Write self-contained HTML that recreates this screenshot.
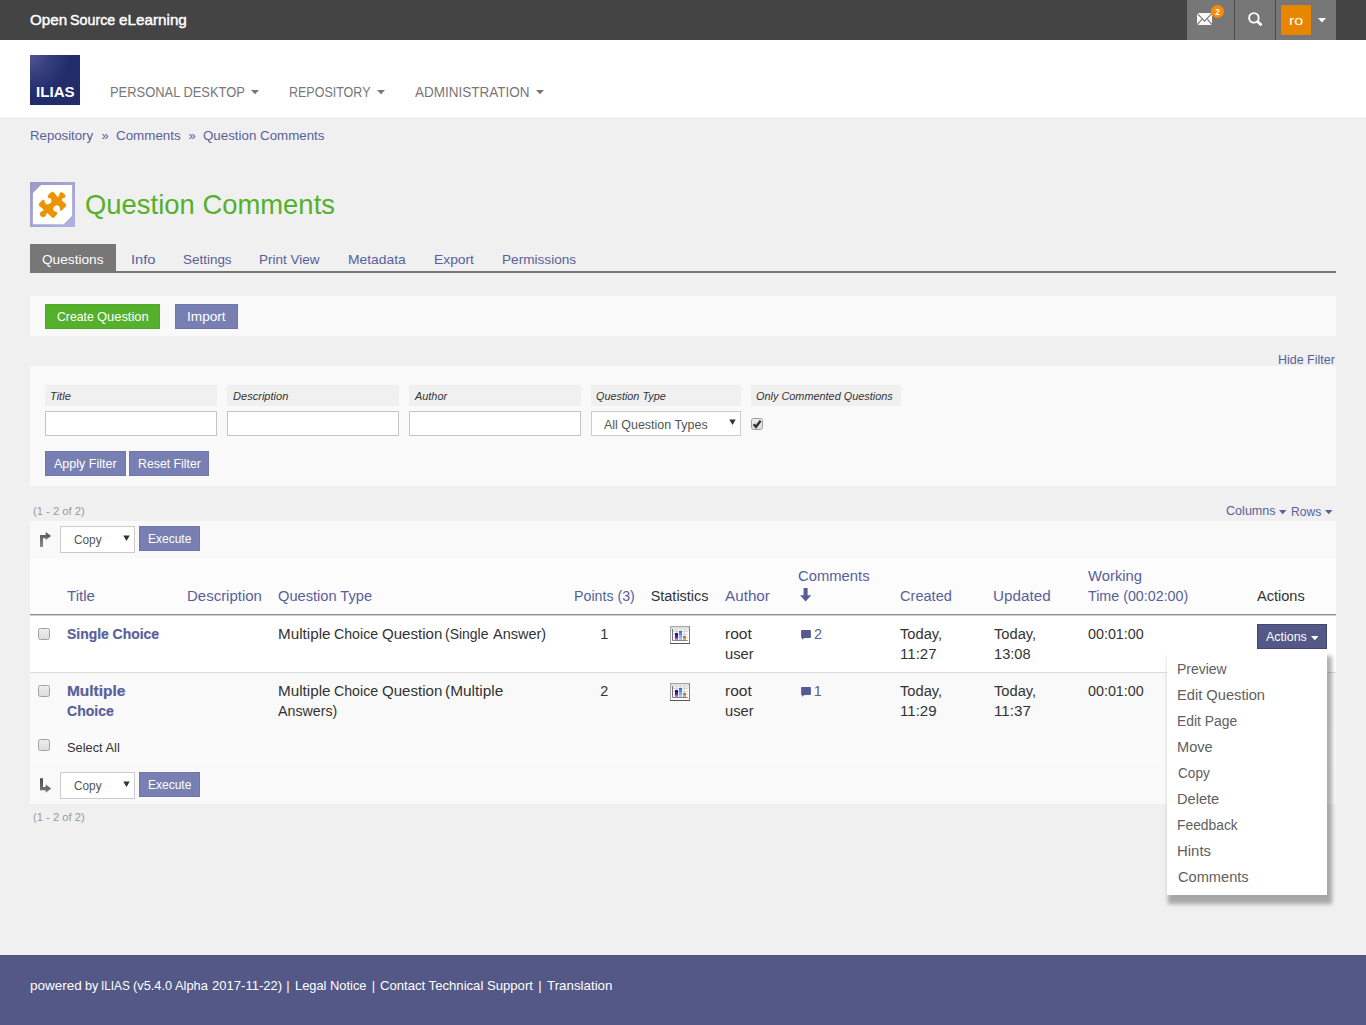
<!DOCTYPE html>
<html lang="en"><head><meta charset="utf-8"><title>Question Comments</title>
<style>
html,body{margin:0;padding:0;}
body{width:1366px;height:1025px;position:relative;overflow:hidden;background:#f0f0f0;font-family:"Liberation Sans",sans-serif;}
#page header,#page nav,#page main,#page footer,#page section,#page ul,#page li{display:contents;}
#page div,#page span,#page a,#page svg{position:absolute;display:block;box-sizing:border-box;}
#page span,#page a{line-height:1;white-space:pre;transform-origin:0 0;text-decoration:none;cursor:pointer;}
</style></head><body><div id="page">
<header>
<div style="left:0px;top:0px;width:1366px;height:40px;background:#444444;"></div>
<div style="left:1187px;top:0px;width:47px;height:40px;background:#777777;"></div>
<div style="left:1234px;top:0px;width:1px;height:40px;background:#4a4a4a;"></div>
<div style="left:1235px;top:0px;width:40px;height:40px;background:#777777;"></div>
<div style="left:1275px;top:0px;width:1px;height:40px;background:#4a4a4a;"></div>
<div style="left:1276px;top:0px;width:60px;height:40px;background:#777777;"></div>
<svg style="left:1196px;top:12px" width="17" height="14" viewBox="0 0 17 14"><rect x="1" y="1.05" width="15" height="11.9" fill="#fafafa"/><path d="M1 1.2 L8.5 9.2 L16 1.4 M1 12.8 L5.9 7.3 M16 12.6 L11.5 7.3" stroke="#777" stroke-width="1.15" fill="none"/></svg>
<div style="left:1211px;top:5px;width:13px;height:13px;border-radius:50%;background:#ff8a00"></div>
<svg style="left:1245px;top:10px" width="20" height="20" viewBox="0 0 20 20"><circle cx="8.9" cy="7.9" r="4.75" stroke="#fff" stroke-width="1.9" fill="none"/><path d="M12.4 11.4 L16.6 15.3" stroke="#fff" stroke-width="2.7" stroke-linecap="butt"/></svg>
<div style="left:1281px;top:5px;width:30px;height:30px;background:#e98600;"></div>
<svg style="left:1318px;top:18px" width="8" height="5" viewBox="0 0 8 5"><path d="M0 0 H8 L4 4.5 Z" fill="#fff"/></svg>
<span style="left:29.86px;top:11.92px;font-size:15.45px;color:#ffffff;transform:scaleX(0.9833);-webkit-text-stroke:0.45px #ffffff;">Open</span>
<span style="left:70.01px;top:11.92px;font-size:15.45px;color:#ffffff;transform:scaleX(0.9242);-webkit-text-stroke:0.45px #ffffff;">Source</span>
<span style="left:119.46px;top:11.92px;font-size:15.45px;color:#ffffff;transform:scaleX(0.9881);-webkit-text-stroke:0.45px #ffffff;">eLearning</span>
<span style="left:1215.24px;top:8.20px;font-size:8.5px;color:#ffffff;font-weight:700;">2</span>
<span style="left:1288.71px;top:13.67px;font-size:13.5px;color:#ffffff;transform:scaleX(1.1905);">ro</span>
<div style="left:0px;top:40px;width:1366px;height:77px;background:#ffffff;"></div>
<div style="left:30px;top:55px;width:50px;height:50px;background:radial-gradient(circle 40px at 0 0, #4e5692 0%, #363f7c 50%, #232c6b 100%);"></div>
<span style="left:35.74px;top:85.00px;font-size:14.3px;color:#ffffff;transform:scaleX(1.0571);font-weight:700;">ILIAS</span>
<nav>
<span style="left:109.63px;top:84.79px;font-size:14.42px;color:#777777;transform:scaleX(0.8961);">PERSONAL DESKTOP</span>
<svg style="left:250.5px;top:90.3px" width="8" height="5" viewBox="0 0 8 5"><path d="M0 0 H8 L4.0 4.3 Z" fill="#777777"/></svg>
<span style="left:288.92px;top:84.79px;font-size:14.42px;color:#777777;transform:scaleX(0.8672);">REPOSITORY</span>
<svg style="left:376.7px;top:90.3px" width="8" height="5" viewBox="0 0 8 5"><path d="M0 0 H8 L4.0 4.3 Z" fill="#777777"/></svg>
<span style="left:415.00px;top:84.79px;font-size:14.42px;color:#777777;transform:scaleX(0.9377);">ADMINISTRATION</span>
<svg style="left:535.7px;top:90.3px" width="8" height="5" viewBox="0 0 8 5"><path d="M0 0 H8 L4.0 4.3 Z" fill="#777777"/></svg>
</nav>
</header>
<main>
<nav>
<a style="left:30.28px;top:129.31px;font-size:12.98px;color:#585f9b;transform:scaleX(1.0180);">Repository</a>
<a style="left:101.50px;top:129.31px;font-size:12.98px;color:#585f9b;">»</a>
<a style="left:115.73px;top:129.31px;font-size:12.98px;color:#585f9b;transform:scaleX(1.0325);">Comments</a>
<a style="left:188.50px;top:129.31px;font-size:12.98px;color:#585f9b;">»</a>
<a style="left:202.99px;top:129.31px;font-size:12.98px;color:#585f9b;transform:scaleX(1.0277);">Question Comments</a>
</nav>
<section>
<svg style="left:30px;top:182px" width="45" height="45" viewBox="0 0 45 45">
<defs><linearGradient id="ig" x1="0" y1="0" x2="1" y2="1"><stop offset="0" stop-color="#999bc4"/><stop offset="0.5" stop-color="#a4a5d2"/><stop offset="1" stop-color="#b1b1e2"/></linearGradient></defs>
<rect width="45" height="45" fill="url(#ig)"/>
<path d="M2.9 11.1 L11.1 2.9 H42.1 V33.7 L33.7 42.2 H2.9 Z" fill="#fff"/>
<g transform="scale(0.05368) translate(-93,-93)"><path fill="#ea9500" stroke="#ea9500" stroke-width="6" stroke-linejoin="round" d="M430 385 C418 350 440 325 480 292 C500 272 530 275 545 295 L580 345 C590 362 600 372 612 372 C628 372 634 352 645 312 C650 290 672 282 700 295 C735 310 755 340 750 365 C745 385 715 390 695 402 C682 412 682 432 700 458 L745 490 C765 505 770 525 755 550 L715 592 C695 615 680 628 665 624 C652 618 652 600 650 580 C648 552 632 530 605 526 C575 522 552 535 538 555 C520 580 515 610 530 630 C545 645 575 648 592 658 C602 670 598 690 590 700 L555 740 C540 755 520 762 505 752 L450 700 C435 682 420 668 408 672 C392 680 392 705 385 722 C378 740 345 748 312 740 C290 732 278 705 280 672 C285 650 320 640 340 630 C352 622 350 608 335 592 L275 545 C258 532 255 512 270 490 L310 442 C322 428 345 418 358 435 C368 450 366 480 380 500 C392 515 415 518 430 512 C460 500 490 480 495 455 C500 425 490 405 470 395 C455 388 440 390 430 385 Z"/></g>
</svg>
<span style="left:84.94px;top:190.73px;font-size:27.13px;color:#55b02c;transform:scaleX(1.0110);">Question Comments</span>
</section>
<nav>
<div style="left:30px;top:271px;width:1306px;height:2px;background:#777777;"></div>
<div style="left:30px;top:244px;width:86px;height:28px;background:#777777;"></div>
<span style="left:41.99px;top:253.07px;font-size:13.39px;color:#ffffff;transform:scaleX(1.0211);">Questions</span>
<a style="left:131.13px;top:253.07px;font-size:13.39px;color:#585f9b;transform:scaleX(1.0976);">Info</a>
<a style="left:183.25px;top:253.07px;font-size:13.39px;color:#585f9b;transform:scaleX(1.0053);">Settings</a>
<a style="left:259.49px;top:253.07px;font-size:13.39px;color:#585f9b;transform:scaleX(1.0085);">Print View</a>
<a style="left:347.96px;top:253.07px;font-size:13.39px;color:#585f9b;transform:scaleX(1.0365);">Metadata</a>
<a style="left:433.97px;top:253.07px;font-size:13.39px;color:#585f9b;transform:scaleX(1.0331);">Export</a>
<a style="left:501.73px;top:253.07px;font-size:13.39px;color:#585f9b;transform:scaleX(1.0175);">Permissions</a>
</nav>
<section>
<div style="left:30px;top:296px;width:1306px;height:40px;background:#f9f9f9;"></div>
<div style="left:45px;top:304px;width:115px;height:25px;background:#55b02c;border:1px solid #4eaa29;"></div>
<div style="left:175px;top:304px;width:63px;height:25px;background:#787fb3;border:1px solid #7077ac;"></div>
<span style="left:56.80px;top:310.74px;font-size:12.36px;color:#ffffff;transform:scaleX(0.9917);">Create</span>
<span style="left:96.58px;top:310.74px;font-size:12.36px;color:#ffffff;transform:scaleX(1.0446);">Question</span>
<span style="left:187.20px;top:310.74px;font-size:12.36px;color:#ffffff;transform:scaleX(1.1029);">Import</span>
</section>
<section>
<a style="left:1278.09px;top:354.24px;font-size:12.36px;color:#585f9b;transform:scaleX(1.0091);">Hide Filter</a>
<div style="left:30px;top:366px;width:1306px;height:120px;background:#f9f9f9;"></div>
<div style="left:45px;top:385px;width:172px;height:21px;background:#f0f0f0;"></div>
<div style="left:227px;top:385px;width:172px;height:21px;background:#f0f0f0;"></div>
<div style="left:409px;top:385px;width:172px;height:21px;background:#f0f0f0;"></div>
<div style="left:591px;top:385px;width:150px;height:21px;background:#f0f0f0;"></div>
<div style="left:751px;top:385px;width:150px;height:21px;background:#f0f0f0;"></div>
<span style="left:49.52px;top:391.21px;font-size:11.33px;color:#333333;transform:scaleX(0.9750);font-style:italic;">Title</span>
<span style="left:232.56px;top:391.21px;font-size:11.33px;color:#333333;transform:scaleX(0.9768);font-style:italic;">Description</span>
<span style="left:415.08px;top:391.21px;font-size:11.33px;color:#333333;transform:scaleX(0.9606);font-style:italic;">Author</span>
<span style="left:596.02px;top:391.21px;font-size:11.33px;color:#333333;transform:scaleX(0.9569);font-style:italic;">Question Type</span>
<span style="left:756.02px;top:391.21px;font-size:11.33px;color:#333333;transform:scaleX(0.9611);font-style:italic;">Only Commented Questions</span>
<div style="left:45px;top:411px;width:172px;height:25px;background:#ffffff;border:1px solid #c4c4c4;"></div>
<div style="left:227px;top:411px;width:172px;height:25px;background:#ffffff;border:1px solid #c4c4c4;"></div>
<div style="left:409px;top:411px;width:172px;height:25px;background:#ffffff;border:1px solid #c4c4c4;"></div>
<div style="left:591px;top:411px;width:150px;height:25px;background:#ffffff;border:1px solid #cccccc;"></div>
<svg style="left:728.7px;top:419.3px" width="8" height="7" viewBox="0 0 8 7"><path d="M0.3 0.4 H6.7 L3.5 5.9 Z" fill="#333"/></svg>
<span style="left:604.00px;top:419.14px;font-size:12.36px;color:#555555;transform:scaleX(1.0078);">All Question Types</span>
<div style="left:751px;top:418px;width:12px;height:12px;border:1px solid #a0a0a0;border-radius:2.5px;background:linear-gradient(#ededed,#dddddd);"></div>
<svg style="left:751px;top:418px" width="12" height="12" viewBox="0 0 12 12"><path d="M2.6 6.2 L5 8.8 L9.6 2.8" stroke="#333" stroke-width="2.4" fill="none"/></svg>
<div style="left:45px;top:451px;width:81px;height:25px;background:#787fb3;border:1px solid #7077ac;"></div>
<div style="left:129px;top:451px;width:80px;height:25px;background:#787fb3;border:1px solid #7077ac;"></div>
<span style="left:54.25px;top:457.54px;font-size:12.36px;color:#ffffff;transform:scaleX(1.0122);">Apply Filter</span>
<span style="left:137.75px;top:457.54px;font-size:12.36px;color:#ffffff;transform:scaleX(0.9960);">Reset Filter</span>
</section>
<section>
<span style="left:33.26px;top:506.31px;font-size:11.33px;color:#999999;transform:scaleX(0.9911);">(1 - 2 of 2)</span>
<a style="left:1225.89px;top:505.14px;font-size:12.36px;color:#585f9b;transform:scaleX(1.0178);">Columns</a>
<svg style="left:1278.5px;top:510.0px" width="7.5" height="5" viewBox="0 0 7.5 5"><path d="M0 0 H7.5 L3.75 4.3 Z" fill="#585f9b"/></svg>
<a style="left:1290.92px;top:506.14px;font-size:12.36px;color:#585f9b;transform:scaleX(0.9763);">Rows</a>
<svg style="left:1324.8px;top:510.4px" width="7.5" height="5" viewBox="0 0 7.5 5"><path d="M0 0 H7.5 L3.75 4.3 Z" fill="#585f9b"/></svg>
<div style="left:30px;top:521px;width:1306px;height:283px;background:#f9f9f9;"></div>
<div style="left:30px;top:558px;width:1306px;height:56px;background:#fcfcfc;"></div>
<div style="left:30px;top:614px;width:1306px;height:1px;background:#8c8c8c;"></div>
<div style="left:30px;top:615px;width:1306px;height:1px;background:#d2d2d2;"></div>
<div style="left:30px;top:616px;width:1306px;height:56px;background:#ffffff;"></div>
<div style="left:30px;top:672px;width:1306px;height:1px;background:#dddddd;"></div>
<div style="left:30px;top:673px;width:1306px;height:56px;background:#f9f9f9;"></div>
<div style="left:30px;top:729px;width:1306px;height:37px;background:#fafafa;"></div>
<svg style="left:39px;top:532px" width="13" height="16" viewBox="0 0 13 16"><defs><linearGradient id="au" x1="0" y1="0" x2="0" y2="1"><stop offset="0" stop-color="#555"/><stop offset="1" stop-color="#8c8c8c"/></linearGradient></defs><path d="M1 14.9 V3 H6.7 V0 L12.2 4.1 L6.7 8.1 V6.3 H4 V14.9 Z" fill="url(#au)"/></svg>
<div style="left:60px;top:526px;width:75px;height:27px;background:#ffffff;border:1px solid #cccccc;"></div>
<svg style="left:122.7px;top:535.3px" width="8" height="7" viewBox="0 0 8 7"><path d="M0.3 0.4 H6.7 L3.5 5.9 Z" fill="#333"/></svg>
<div style="left:139px;top:526px;width:61px;height:25px;background:#787fb3;border:1px solid #7077ac;"></div>
<span style="left:73.82px;top:533.54px;font-size:12.36px;color:#555555;transform:scaleX(0.9558);">Copy</span>
<span style="left:148.03px;top:532.74px;font-size:12.36px;color:#ffffff;transform:scaleX(0.9711);">Execute</span>
<svg style="left:39px;top:778px" width="13" height="16" viewBox="0 0 13 16"><defs><linearGradient id="ad" x1="0" y1="0" x2="0" y2="1"><stop offset="0" stop-color="#4c4c4c"/><stop offset="1" stop-color="#7a7a7a"/></linearGradient></defs><path d="M1 0.2 H4 V9 H6.7 V6.4 L12.2 10.6 L6.7 14.8 V12.3 H1 Z" fill="url(#ad)"/></svg>
<div style="left:60px;top:772px;width:75px;height:27px;background:#ffffff;border:1px solid #cccccc;"></div>
<svg style="left:122.7px;top:781.3px" width="8" height="7" viewBox="0 0 8 7"><path d="M0.3 0.4 H6.7 L3.5 5.9 Z" fill="#333"/></svg>
<div style="left:139px;top:772px;width:61px;height:25px;background:#787fb3;border:1px solid #7077ac;"></div>
<span style="left:73.82px;top:779.54px;font-size:12.36px;color:#555555;transform:scaleX(0.9558);">Copy</span>
<span style="left:148.03px;top:778.74px;font-size:12.36px;color:#ffffff;transform:scaleX(0.9711);">Execute</span>
<a style="left:67.24px;top:588.79px;font-size:14.42px;color:#585f9b;transform:scaleX(1.0485);">Title</a>
<a style="left:186.70px;top:588.79px;font-size:14.42px;color:#585f9b;transform:scaleX(1.0400);">Description</a>
<a style="left:277.84px;top:588.79px;font-size:14.42px;color:#585f9b;transform:scaleX(1.0153);">Question Type</a>
<a style="left:574.47px;top:588.79px;font-size:14.42px;color:#585f9b;transform:scaleX(0.9866);">Points (3)</a>
<span style="left:650.75px;top:588.79px;font-size:14.42px;color:#333333;">Statistics</span>
<a style="left:725.00px;top:588.79px;font-size:14.42px;color:#585f9b;transform:scaleX(1.0580);">Author</a>
<a style="left:797.83px;top:568.99px;font-size:14.42px;color:#585f9b;transform:scaleX(1.0277);">Comments</a>
<svg style="left:800px;top:588px" width="12" height="15" viewBox="0 0 12 15"><path d="M3.6 0.1 H7.6 V7.3 H11.2 L5.65 13.6 L0.1 7.3 H3.6 Z" fill="#565b94"/></svg>
<a style="left:899.74px;top:588.79px;font-size:14.42px;color:#585f9b;transform:scaleX(1.0121);">Created</a>
<a style="left:993.34px;top:588.79px;font-size:14.42px;color:#585f9b;transform:scaleX(1.0590);">Updated</a>
<a style="left:1088.40px;top:568.99px;font-size:14.42px;color:#585f9b;transform:scaleX(1.0280);">Working</a>
<a style="left:1088.15px;top:588.79px;font-size:14.42px;color:#585f9b;transform:scaleX(0.9910);">Time (00:02:00)</a>
<span style="left:1257.00px;top:588.79px;font-size:14.42px;color:#333333;transform:scaleX(1.0096);">Actions</span>
<a style="left:67.02px;top:627.04px;font-size:14.42px;color:#585f9b;transform:scaleX(0.9655);font-weight:700;-webkit-text-stroke:0.2px #585f9b;">Single Choice</a>
<span style="left:278.28px;top:627.04px;font-size:14.42px;color:#333333;transform:scaleX(1.0576);">Multiple</span>
<span style="left:334.36px;top:627.04px;font-size:14.42px;color:#333333;transform:scaleX(0.9839);">Choice</span>
<span style="left:382.12px;top:627.04px;font-size:14.42px;color:#333333;transform:scaleX(1.0464);">Question</span>
<span style="left:445.33px;top:627.04px;font-size:14.42px;color:#333333;transform:scaleX(0.9688);">(Single</span>
<span style="left:492.60px;top:627.04px;font-size:14.42px;color:#333333;transform:scaleX(1.0058);">Answer)</span>
<span style="left:600.29px;top:627.04px;font-size:14.42px;color:#333333;">1</span>
<span style="left:725.32px;top:627.04px;font-size:14.42px;color:#333333;transform:scaleX(1.0779);">root</span>
<span style="left:725.38px;top:647.04px;font-size:14.42px;color:#333333;transform:scaleX(1.0224);">user</span>
<a style="left:813.95px;top:627.04px;font-size:14.42px;color:#585f9b;">2</a>
<span style="left:900.25px;top:627.04px;font-size:14.42px;color:#333333;transform:scaleX(1.0189);">Today,</span>
<span style="left:899.65px;top:647.04px;font-size:14.42px;color:#333333;transform:scaleX(1.0466);">11:27</span>
<span style="left:994.15px;top:627.04px;font-size:14.42px;color:#333333;transform:scaleX(1.0189);">Today,</span>
<span style="left:993.59px;top:647.04px;font-size:14.42px;color:#333333;transform:scaleX(1.0145);">13:08</span>
<span style="left:1087.90px;top:627.04px;font-size:14.42px;color:#333333;transform:scaleX(0.9927);">00:01:00</span>
<div style="left:38px;top:628.05px;width:12px;height:12px;border:1px solid #a0a0a0;border-radius:2.5px;background:linear-gradient(#ededed,#dddddd);"></div>
<svg style="left:670px;top:626px" width="20" height="18" viewBox="0 0 20 18">
<defs><linearGradient id="sg626" x1="0" y1="0" x2="0" y2="1"><stop offset="0" stop-color="#d9d9d9"/><stop offset="0.45" stop-color="#fff"/></linearGradient>
<linearGradient id="p626" x1="0" y1="0" x2="0" y2="1"><stop offset="0" stop-color="#3f007f"/><stop offset="0.55" stop-color="#6a0aa8"/><stop offset="1" stop-color="#c9a0e8"/></linearGradient>
<linearGradient id="b626" x1="0" y1="0" x2="0" y2="1"><stop offset="0" stop-color="#1e73d8"/><stop offset="1" stop-color="#a8dcff"/></linearGradient>
<linearGradient id="o626" x1="0" y1="0" x2="0" y2="1"><stop offset="0" stop-color="#c65a14"/><stop offset="1" stop-color="#f0b890"/></linearGradient></defs>
<rect x="0.5" y="0.5" width="19" height="17" fill="url(#sg626)" stroke="#a4a4a4"/>
<path d="M19.5 0.5 V17.5" stroke="#808080" fill="none"/><path d="M0 17.5 H20" stroke="#585858" fill="none"/>
<path d="M3 5.5 H18 M3 8.5 H18 M3 11.5 H18 M6.5 3 V14 M10.5 3 V14 M14.5 3 V14" stroke="#cfcfcf" stroke-width="0.8"/>
<rect x="5" y="7" width="3" height="7" fill="url(#p626)"/>
<rect x="9" y="5" width="3" height="9" fill="url(#b626)"/>
<rect x="13" y="10" width="3" height="4" fill="url(#o626)"/>
<path d="M2.5 3 V14.4 H17.7" stroke="#777" stroke-width="1" fill="none"/>
</svg>
<svg style="left:801px;top:630.0px" width="11" height="11" viewBox="0 0 11 11"><path d="M0.8 0.1 H9.2 Q9.9 0.1 9.9 0.8 V7.3 Q9.9 8 9.2 8 H3.3 L1.1 9.8 V8 H0.8 Q0.1 8 0.1 7.3 V0.8 Q0.1 0.1 0.8 0.1 Z" fill="#565b94"/></svg>
<a style="left:66.88px;top:684.04px;font-size:14.42px;color:#585f9b;transform:scaleX(1.0726);font-weight:700;-webkit-text-stroke:0.2px #585f9b;">Multiple</a>
<a style="left:67.01px;top:704.04px;font-size:14.42px;color:#585f9b;transform:scaleX(0.9734);font-weight:700;-webkit-text-stroke:0.2px #585f9b;">Choice</a>
<span style="left:278.28px;top:684.04px;font-size:14.42px;color:#333333;transform:scaleX(1.0576);">Multiple</span>
<span style="left:334.36px;top:684.04px;font-size:14.42px;color:#333333;transform:scaleX(0.9839);">Choice</span>
<span style="left:382.12px;top:684.04px;font-size:14.42px;color:#333333;transform:scaleX(1.0464);">Question</span>
<span style="left:445.23px;top:684.04px;font-size:14.42px;color:#333333;transform:scaleX(1.0692);">(Multiple</span>
<span style="left:278.30px;top:704.04px;font-size:14.42px;color:#333333;transform:scaleX(0.9873);">Answers)</span>
<span style="left:600.29px;top:684.04px;font-size:14.42px;color:#333333;">2</span>
<span style="left:725.32px;top:684.04px;font-size:14.42px;color:#333333;transform:scaleX(1.0779);">root</span>
<span style="left:725.38px;top:704.04px;font-size:14.42px;color:#333333;transform:scaleX(1.0224);">user</span>
<a style="left:813.70px;top:684.04px;font-size:14.42px;color:#585f9b;">1</a>
<span style="left:900.25px;top:684.04px;font-size:14.42px;color:#333333;transform:scaleX(1.0189);">Today,</span>
<span style="left:899.65px;top:704.04px;font-size:14.42px;color:#333333;transform:scaleX(1.0466);">11:29</span>
<span style="left:994.15px;top:684.04px;font-size:14.42px;color:#333333;transform:scaleX(1.0189);">Today,</span>
<span style="left:993.55px;top:704.04px;font-size:14.42px;color:#333333;transform:scaleX(1.0526);">11:37</span>
<span style="left:1087.90px;top:684.04px;font-size:14.42px;color:#333333;transform:scaleX(0.9927);">00:01:00</span>
<div style="left:38px;top:685.05px;width:12px;height:12px;border:1px solid #a0a0a0;border-radius:2.5px;background:linear-gradient(#ededed,#dddddd);"></div>
<svg style="left:670px;top:683px" width="20" height="18" viewBox="0 0 20 18">
<defs><linearGradient id="sg683" x1="0" y1="0" x2="0" y2="1"><stop offset="0" stop-color="#d9d9d9"/><stop offset="0.45" stop-color="#fff"/></linearGradient>
<linearGradient id="p683" x1="0" y1="0" x2="0" y2="1"><stop offset="0" stop-color="#3f007f"/><stop offset="0.55" stop-color="#6a0aa8"/><stop offset="1" stop-color="#c9a0e8"/></linearGradient>
<linearGradient id="b683" x1="0" y1="0" x2="0" y2="1"><stop offset="0" stop-color="#1e73d8"/><stop offset="1" stop-color="#a8dcff"/></linearGradient>
<linearGradient id="o683" x1="0" y1="0" x2="0" y2="1"><stop offset="0" stop-color="#c65a14"/><stop offset="1" stop-color="#f0b890"/></linearGradient></defs>
<rect x="0.5" y="0.5" width="19" height="17" fill="url(#sg683)" stroke="#a4a4a4"/>
<path d="M19.5 0.5 V17.5" stroke="#808080" fill="none"/><path d="M0 17.5 H20" stroke="#585858" fill="none"/>
<path d="M3 5.5 H18 M3 8.5 H18 M3 11.5 H18 M6.5 3 V14 M10.5 3 V14 M14.5 3 V14" stroke="#cfcfcf" stroke-width="0.8"/>
<rect x="5" y="7" width="3" height="7" fill="url(#p683)"/>
<rect x="9" y="5" width="3" height="9" fill="url(#b683)"/>
<rect x="13" y="10" width="3" height="4" fill="url(#o683)"/>
<path d="M2.5 3 V14.4 H17.7" stroke="#777" stroke-width="1" fill="none"/>
</svg>
<svg style="left:801px;top:687.0px" width="11" height="11" viewBox="0 0 11 11"><path d="M0.8 0.1 H9.2 Q9.9 0.1 9.9 0.8 V7.3 Q9.9 8 9.2 8 H3.3 L1.1 9.8 V8 H0.8 Q0.1 8 0.1 7.3 V0.8 Q0.1 0.1 0.8 0.1 Z" fill="#565b94"/></svg>
<div style="left:1257px;top:624px;width:70px;height:25px;background:#535886;border:1px solid #40466f;"></div>
<span style="left:1266.00px;top:630.74px;font-size:12.36px;color:#ffffff;transform:scaleX(1.0075);">Actions</span>
<svg style="left:1310.6px;top:635.6px" width="7.6" height="5" viewBox="0 0 7.6 5"><path d="M0 0 H7.6 L3.8 4.3 Z" fill="#ffffff"/></svg>
<div style="left:38px;top:739px;width:12px;height:12px;border:1px solid #a0a0a0;border-radius:2.5px;background:linear-gradient(#ededed,#dddddd);"></div>
<span style="left:66.78px;top:741.17px;font-size:13.39px;color:#333333;transform:scaleX(0.9585);">Select All</span>
<span style="left:33.26px;top:811.81px;font-size:11.33px;color:#999999;transform:scaleX(0.9911);">(1 - 2 of 2)</span>
</section>
<section>
<div style="left:1167px;top:651px;width:160px;height:244px;background:#fff;box-shadow:2.5px 6.5px 4px 2px rgba(0,0,0,0.3);"></div>
<span style="left:1177.29px;top:661.59px;font-size:14.42px;color:#606060;transform:scaleX(0.9700);">Preview</span>
<span style="left:1177.23px;top:687.59px;font-size:14.42px;color:#606060;transform:scaleX(1.0178);">Edit Question</span>
<span style="left:1177.30px;top:713.59px;font-size:14.42px;color:#606060;transform:scaleX(0.9630);">Edit Page</span>
<span style="left:1177.24px;top:739.59px;font-size:14.42px;color:#606060;transform:scaleX(1.0119);">Move</span>
<span style="left:1177.79px;top:765.59px;font-size:14.42px;color:#606060;transform:scaleX(0.9435);">Copy</span>
<span style="left:1177.23px;top:791.59px;font-size:14.42px;color:#606060;transform:scaleX(1.0138);">Delete</span>
<span style="left:1177.30px;top:817.59px;font-size:14.42px;color:#606060;transform:scaleX(0.9597);">Feedback</span>
<span style="left:1177.21px;top:843.59px;font-size:14.42px;color:#606060;transform:scaleX(1.0355);">Hints</span>
<span style="left:1177.74px;top:869.59px;font-size:14.42px;color:#606060;transform:scaleX(1.0146);">Comments</span>
</section>
</main>
<footer>
<div style="left:0px;top:955px;width:1366px;height:70px;background:#535886;"></div>
<span style="left:29.82px;top:979.21px;font-size:12.98px;color:#ffffff;transform:scaleX(1.0404);">powered</span>
<span style="left:84.77px;top:979.21px;font-size:12.98px;color:#ffffff;transform:scaleX(0.9692);">by</span>
<span style="left:101.46px;top:979.21px;font-size:12.98px;color:#ffffff;transform:scaleX(0.9100);">ILIAS</span>
<span style="left:133.06px;top:979.21px;font-size:12.98px;color:#ffffff;transform:scaleX(0.9844);">(v5.4.0</span>
<span style="left:175.30px;top:979.21px;font-size:12.98px;color:#ffffff;transform:scaleX(0.9925);">Alpha</span>
<span style="left:211.85px;top:979.21px;font-size:12.98px;color:#ffffff;transform:scaleX(1.0066);">2017-11-22)</span>
<span style="left:286.35px;top:979.21px;font-size:12.98px;color:#ffffff;">|</span>
<span style="left:295.41px;top:979.21px;font-size:12.98px;color:#ffffff;transform:scaleX(0.9915);">Legal Notice</span>
<span style="left:371.75px;top:979.21px;font-size:12.98px;color:#ffffff;">|</span>
<span style="left:379.74px;top:979.21px;font-size:12.98px;color:#ffffff;transform:scaleX(1.0116);">Contact Technical Support</span>
<span style="left:538.25px;top:979.21px;font-size:12.98px;color:#ffffff;">|</span>
<span style="left:546.74px;top:979.21px;font-size:12.98px;color:#ffffff;transform:scaleX(1.0279);">Translation</span>
</footer>
</div></body></html>
